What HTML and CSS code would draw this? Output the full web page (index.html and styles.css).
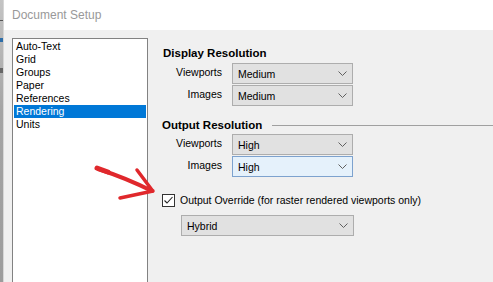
FILE: index.html
```html
<!DOCTYPE html>
<html lang="en">

<head>
    <meta charset="UTF-8">
    <meta name="viewport" content="width=device-width, initial-scale=1.0">
    <title>Document Setup</title>
    <link rel="stylesheet" href="styles.css">
</head>

<body>
    <div class="desktop">
        <!-- fereastra din spate, se vede doar marginea -->
        <div class="behind">
            <span class="mark mark-line"></span>
            <span class="mark mark-blue"></span>
            <span class="mark mark-x"></span>
        </div>

        <div class="dialog">
            <div class="titlebar">Document Setup</div>

            <div class="content">
                <ul class="pages">
                    <li>Auto-Text</li>
                    <li>Grid</li>
                    <li>Groups</li>
                    <li>Paper</li>
                    <li>References</li>
                    <li class="selected">Rendering</li>
                    <li>Units</li>
                </ul>

                <div class="settings">
                    <div class="group-title">Display Resolution</div>
                    <div class="field-grid">
                        <label>Viewports</label>
                        <div class="combo">Medium<svg width="9" height="5" viewBox="0 0 9 5"><polyline points="0.5,0.5 4.5,4.5 8.5,0.5" /></svg></div>
                        <label>Images</label>
                        <div class="combo">Medium<svg width="9" height="5" viewBox="0 0 9 5"><polyline points="0.5,0.5 4.5,4.5 8.5,0.5" /></svg></div>
                    </div>

                    <div class="group-title ruled">Output Resolution</div>
                    <div class="field-grid tight">
                        <label>Viewports</label>
                        <div class="combo">High<svg width="9" height="5" viewBox="0 0 9 5"><polyline points="0.5,0.5 4.5,4.5 8.5,0.5" /></svg></div>
                        <label>Images</label>
                        <div class="combo hover">High<svg width="9" height="5" viewBox="0 0 9 5"><polyline points="0.5,0.5 4.5,4.5 8.5,0.5" /></svg></div>
                    </div>

                    <div class="check-row">
                        <span class="checkbox"><svg width="11" height="11" viewBox="0 0 11 11"><polyline points="1.5,5.5 4,8 9.5,2" /></svg></span>
                        <span>Output Override (for raster rendered viewports only)</span>
                    </div>

                    <div class="combo wide">Hybrid<svg width="9" height="5" viewBox="0 0 9 5"><polyline points="0.5,0.5 4.5,4.5 8.5,0.5" /></svg></div>
                </div>
            </div>
        </div>
    </div>

    <!-- sageata rosie desenata peste captura -->
    <svg class="arrow" width="493" height="282" viewBox="0 0 493 282">
        <path d="M98,169 Q126,178 152,191" stroke-width="4" />
        <path d="M97,168 L108,172" stroke-width="5" />
        <path d="M137,170 L152,190" stroke-width="3.5" />
        <path d="M120,198 L153,191" stroke-width="3.5" />
    </svg>
</body>

</html>
```

FILE: styles.css
```css
body {
    margin: 0;
    width: 493px;
    height: 282px;
    overflow: hidden;
    font-family: "Liberation Sans", Arial, sans-serif;
    font-size: 10.5px;
    color: #000;
    background: #f0f0f0;
}

.desktop {
    display: flex;
    height: 282px;
}

.behind {
    position: relative;
    width: 3px;
    flex-shrink: 0;
    background: linear-gradient(#c4c4c4, #a4a4a4 40%, #9c9c9c);
}

.mark {
    position: absolute;
    left: 0;
    width: 3px;
}

.mark-line {
    top: 20px;
    height: 1px;
    background: #555;
}

.mark-blue {
    top: 38px;
    height: 4px;
    background: #2d6da8;
}

.mark-x {
    top: 68px;
    height: 5px;
    background: #666;
}

.dialog {
    flex: 1;
    display: flex;
    flex-direction: column;
    border-left: 1px solid #d6d6d6;
}

.titlebar {
    height: 30px;
    flex-shrink: 0;
    display: flex;
    align-items: center;
    padding-left: 8px;
    background: #fff;
    color: #999;
    font-size: 12px;
}

.content {
    flex: 1;
    display: flex;
    align-items: flex-start;
    padding: 8px 0 0 8px;
    background: #f0f0f0;
}

.pages {
    list-style: none;
    margin: 0;
    padding: 1px 0;
    width: 136px;
    height: 244px;
    box-sizing: border-box;
    flex-shrink: 0;
    background: #fff;
    border: 1px solid #828282;
    border-bottom: none;
}

.pages li {
    height: 13px;
    line-height: 13px;
    margin: 0 1px;
    padding-left: 2px;
}

.pages li.selected {
    background: #0078d7;
    color: #fff;
}

.settings {
    flex: 1;
    display: flex;
    flex-direction: column;
    padding-top: 8px;
    padding-left: 14px;
}

.group-title {
    font-weight: bold;
    font-size: 11.5px;
    line-height: 14px;
    margin-left: 1px;
}

.group-title.ruled {
    display: flex;
    align-items: center;
    margin-top: 12px;
    margin-left: 0;
}

.group-title.ruled::after {
    content: "";
    flex: 1;
    margin-left: 10px;
    border-top: 1px solid #a0a0a0;
}

.field-grid {
    display: grid;
    grid-template-columns: 60px 121px;
    column-gap: 10px;
    row-gap: 1px;
    margin-top: 3px;
}

.field-grid.tight {
    margin-top: 2px;
}

.field-grid label {
    text-align: right;
    align-self: center;
    padding-bottom: 3px;
}

.combo {
    height: 21px;
    box-sizing: border-box;
    display: flex;
    align-items: center;
    justify-content: space-between;
    padding: 0 5px 0 5px;
    background: #e1e1e1;
    border: 1px solid #adadad;
}

.combo svg polyline {
    fill: none;
    stroke: #606060;
    stroke-width: 1;
}

.combo.hover {
    background: #e5f1fb;
    border-color: #7da2ce;
}

.combo.wide {
    width: 173px;
    margin-top: 8px;
    margin-left: 19px;
}

.check-row {
    display: flex;
    align-items: center;
    gap: 5px;
    height: 14px;
    margin-top: 16px;
}

.checkbox {
    width: 13px;
    height: 13px;
    box-sizing: border-box;
    display: flex;
    align-items: center;
    justify-content: center;
    background: #fff;
    border: 1px solid #333;
}

.checkbox polyline {
    fill: none;
    stroke: #222;
    stroke-width: 1.1;
}

.arrow {
    position: absolute;
    top: 0;
    left: 0;
    pointer-events: none;
}

.arrow path {
    fill: none;
    stroke: #e0282c;
    stroke-linecap: round;
}
```
